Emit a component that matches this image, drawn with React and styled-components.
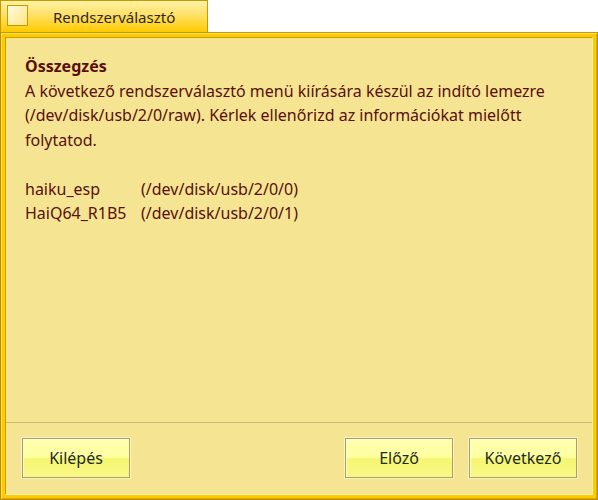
import React from 'react'
import styled, { createGlobalStyle } from 'styled-components'

const GlobalStyle = createGlobalStyle`
  html, body {
    margin: 0;
    padding: 0;
    background: #ffffff;
  }
  body {
    font-family: "Noto Sans", "DejaVu Sans", sans-serif;
    font-size: 16px;
  }
`

const Window = styled.div`
  width: 598px;
  height: 500px;
  display: flex;
  flex-direction: column;
`

const Tab = styled.div`
  width: 208px;
  height: 32px;
  box-sizing: border-box;
  border: 1px solid #c39a00;
  border-bottom: none;
  background: linear-gradient(to bottom, #fff2a8 0%, #ffe066 45%, #ffcb00 100%);
  display: flex;
  align-items: center;
  padding-left: 6px;
  gap: 25px;
`

const CloseBox = styled.div`
  width: 21px;
  height: 21px;
  box-sizing: border-box;
  border: 1px solid #c39a00;
  background: linear-gradient(135deg, #fffbe0 0%, #ffe680 100%);
  margin-top: -3px;
`

const Title = styled.span`
  color: #2a2a2a;
  font-size: 15px;
`

const Frame = styled.div`
  flex: 1;
  display: flex;
  box-sizing: border-box;
  border: 1px solid #b88e00;
  border-top-color: #c39a00;
  background: #ffcb00;
  padding: 4px;
  box-shadow: inset 1px 1px 0 #ffe066, inset -1px -1px 0 #e0a800;
`

const Content = styled.div`
  flex: 1;
  display: flex;
  flex-direction: column;
  background: #f5e593;
  border: 1px solid #c99f00;
  border-right-color: #fff2b0;
  border-bottom-color: #fff2b0;
`

const Body = styled.div`
  flex: 1;
  padding: 16px 14px 0 19px;
  color: #5a0e0e;
  line-height: 24.5px;
`

const Heading = styled.div`
  font-weight: 700;
`

const Paragraph = styled.p`
  margin: 0 0 24.5px;
`

const DiskList = styled.div`
  display: grid;
  grid-template-columns: 116px auto;
`

const Separator = styled.div`
  height: 1px;
  background: #cbb878;
`

const ButtonBar = styled.div`
  display: flex;
  align-items: center;
  gap: 16px;
  padding: 15px 15px 16px 16px;
`

const Spacer = styled.div`
  flex: 1;
`

const Button = styled.button`
  width: 108px;
  height: 40px;
  box-sizing: border-box;
  border: 1px solid #a8a060;
  background: linear-gradient(to bottom, #ffffb0 0%, #ffffa0 48%, #f6f672 52%, #f8f888 100%);
  box-shadow: inset 1px 1px 0 #ffffe0, 0 0 0 1px #fbf2c0;
  font-family: "Noto Sans", "DejaVu Sans", sans-serif;
  font-size: 16px;
  color: #1c2a22;
  padding: 0;
  cursor: pointer;
`

const disks = [
  { name: 'haiku_esp', path: '(/dev/disk/usb/2/0/0)' },
  { name: 'HaiQ64_R1B5', path: '(/dev/disk/usb/2/0/1)' }
]

export default function App() {
  return (
    <>
      <GlobalStyle />
      <Window>
        <Tab>
          <CloseBox />
          <Title>Rendszerválasztó</Title>
        </Tab>
        <Frame>
          <Content>
            <Body>
              <Heading>Összegzés</Heading>
              <Paragraph>
                A következő rendszerválasztó menü kiírására készül az indító lemezre
                <br />
                (/dev/disk/usb/2/0/raw). Kérlek ellenőrizd az információkat mielőtt
                <br />
                folytatod.
              </Paragraph>
              <DiskList>
                {disks.map(d => (
                  <React.Fragment key={d.name}>
                    <span>{d.name}</span>
                    <span>{d.path}</span>
                  </React.Fragment>
                ))}
              </DiskList>
            </Body>
            <Separator />
            <ButtonBar>
              <Button>Kilépés</Button>
              <Spacer />
              <Button>Előző</Button>
              <Button>Következő</Button>
            </ButtonBar>
          </Content>
        </Frame>
      </Window>
    </>
  )
}
